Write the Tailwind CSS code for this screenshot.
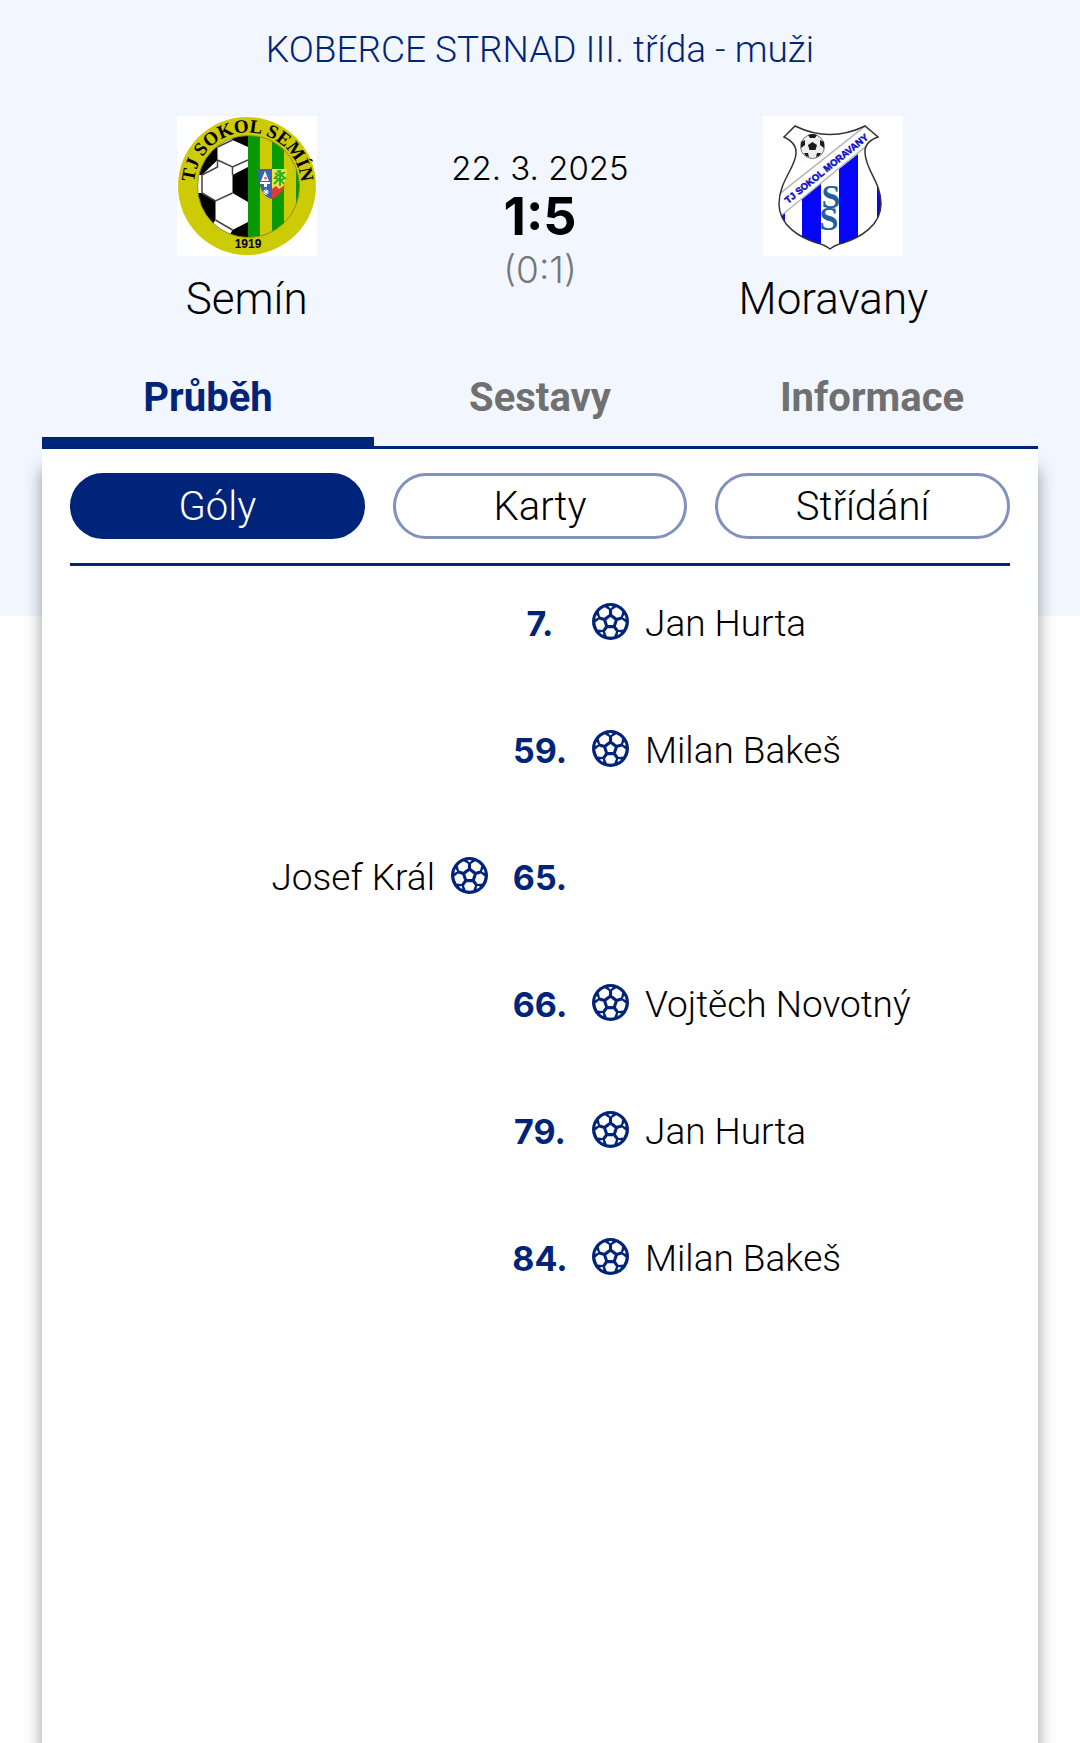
<!DOCTYPE html>
<html lang="cs">
<head>
  <meta charset="UTF-8" />
  <meta name="viewport" content="width=device-width, initial-scale=1.0">
  <title>Semín - Moravany</title>
  <script src="https://cdn.jsdelivr.net/npm/@tailwindcss/browser@4"></script>
</head>
<body class="bg-white text-black font-['Roboto',sans-serif] font-[350] min-h-screen flex flex-col overflow-x-hidden">

  <!-- Shared goal icon -->
  <svg class="hidden">
    <symbol id="goal" viewBox="-50 -50 100 100">
      <circle r="50" fill="#00247a" />
      <g fill="#fff">
        <path d="M0-12 11.400-3.700 7 9.700H-7L-11.400-3.700Z" />
        <g id="goal-part">
          <path d="M-8 18H8L15 28 10 40Q0 42-10 40L-15 28Z" />
          <path d="M0-35 6-41Q0-43-6-41Z" />
        </g>
        <use href="#goal-part" transform="rotate(72)" />
        <use href="#goal-part" transform="rotate(144)" />
        <use href="#goal-part" transform="rotate(216)" />
        <use href="#goal-part" transform="rotate(288)" />
      </g>
    </symbol>
  </svg>

  <!-- Match header -->
  <header class="bg-[#f2f7ff] pt-5 pb-[167px]">
    <h1 class="text-center text-[37px] leading-[60px] text-[#00247a]">KOBERCE STRNAD III. třída - muži</h1>

    <div class="grid grid-cols-3 px-[100px] pt-9 text-center">
      <div class="flex flex-col items-center">
        <svg class="w-[140px] h-[140px]" viewBox="0 0 140 140" role="img" aria-label="TJ Sokol Semín">
          <defs>
            <clipPath id="semin-inner"><circle cx="71.500" cy="70.500" r="51" /></clipPath>
            <path id="semin-arc" d="M17 70A53.500 53.500 0 0 1 124 70" />
          </defs>
          <rect width="140" height="140" fill="#fff" />
          <circle cx="70" cy="70" r="69" fill="#cdcb05" />
          <g clip-path="url(#semin-inner)">
            <rect x="20" y="18" width="51" height="106" fill="#fff" />
            <g fill="#000">
              <path d="M52 18H71V31L55.500 24Z" />
              <path d="M18 20 40.500 31V44L25 59H18Z" />
              <path d="M71 51 55.500 59V77L71 86Z" />
              <path d="M18 77H25L38.500 85V104L30 116 18 100Z" />
              <path d="M55.500 114 71 106V124H50Z" />
            </g>
            <path d="M40.500 31 55.500 24M40.500 44 55.500 51 71 44M55.500 51V59M40.500 44 40.500 51 25 59V77L38.500 85 55.500 77M38.500 104 55.500 114" fill="none" stroke="#444" stroke-width="1.500" />
            <path d="M71 18H83V124H71ZM95 18H107V124H95ZM119 18H126V124H119Z" fill="#079a05" />
            <path d="M83 18H95V124H83ZM107 18H119V124H107Z" fill="#cdcb05" />
          </g>
          <circle cx="71.500" cy="70.500" r="51" fill="none" stroke="#8f8f20" />
          <!-- Town arms -->
          <path d="M81 53H95V83Q81 80 81 53Z" fill="#3c62b4" />
          <path d="M95 53H110Q109 67 105 74H95Z" fill="#f2e23c" />
          <path d="M95 73 99 70 102 73 108 69Q103 81 95 83Z" fill="#dd3a3c" />
          <path d="M88 55 92 65H84ZM83 66H93V68H83ZM87 68H90V71H87Z" fill="#fff" />
          <circle cx="88.500" cy="62" r="1.500" fill="#e36a6a" />
          <path d="M89 73V79M86 76H92M87 74 91 78M91 74 87 78" stroke="#fff" />
          <path d="M103 54V70M98 57 101 59 98 62 102 63 97 68M108 56 104 59 108 62 104 64 107 68M100 55 106 58" fill="none" stroke="#2fae2c" stroke-width="2" />
          <text class="font-['Liberation_Serif',serif] font-bold" font-size="19" text-anchor="middle"><textPath href="#semin-arc" startOffset="50%">TJ SOKOL SEMÍN</textPath></text>
          <text class="font-['Liberation_Sans',sans-serif] font-bold" x="71" y="132" font-size="12" text-anchor="middle">1919</text>
        </svg>
        <h2 class="mt-4 text-[44px] leading-[54px]">Semín</h2>
      </div>

      <div class="pt-8 font-['Inter',sans-serif] font-light">
        <p class="text-[33px] leading-[40px]">22. 3. 2025</p>
        <p class="text-[52px] leading-[58px] font-bold">1:5</p>
        <p class="text-[37px] leading-[48px] text-[#777]">(0:1)</p>
      </div>

      <div class="flex flex-col items-center">
        <svg class="w-[140px] h-[140px]" viewBox="0 0 140 140" role="img" aria-label="TJ Sokol Moravany">
          <defs>
            <path id="moravany-shield" d="M32 10Q67 27 102 10L115 21Q101 26 102 37C103 55 118 66 118 88C118 110 96 122 80 127Q72 129 67 133Q62 129 54 127C38 122 16 110 16 88C16 66 32 52 33 38Q34 27 21 21Z" />
            <clipPath id="moravany-clip"><use href="#moravany-shield" /></clipPath>
          </defs>
          <rect width="140" height="140" fill="#fff" />
          <g clip-path="url(#moravany-clip)">
            <path d="M16 101 22 96V130H16ZM39 83 58 67V135H39ZM76 53 95 38V135H76ZM114 20H122V130H114Z" fill="#0505fa" />
            <path d="M10 83 106 7 118 18 14 103Z" fill="#fff" stroke="#b5b5b5" stroke-width="1.500" />
          </g>
          <use href="#moravany-shield" fill="none" stroke="#333" stroke-width="1.500" />
          <circle cx="49.500" cy="30.500" r="12" fill="#eee" stroke="#777" />
          <path d="M49.500 26 54 29 52.500 34H46.500L45 29ZM45 19Q50 17 54 19L52 22H47ZM38 26 42 24 42 29 38 32ZM61 26 57 24V29L61 32ZM41 37 45 37 46 41 43 40ZM58 37 54 37 53 41 56 40Z" fill="#1a1a1a" />
          <g class="font-['Liberation_Serif',serif] font-bold" fill="#23609a" font-size="34" text-anchor="middle">
            <text x="68" y="92">S</text>
            <text x="66" y="114">S</text>
          </g>
          <text class="font-['Liberation_Sans',sans-serif] font-bold" transform="translate(25 88) rotate(-39)" font-size="9.500" fill="#0c0cc8" stroke="#0c0cc8" stroke-width="0.500">TJ SOKOL MORAVANY</text>
        </svg>
        <h2 class="mt-4 text-[44px] leading-[54px]">Moravany</h2>
      </div>
    </div>

    <!-- Tabs -->
    <nav class="mx-[42px] mt-[30px] grid grid-cols-3 border-b-3 border-[#00247a] text-[40px] font-bold text-[#707070]">
      <button type="button" class="h-[90px] pt-0.5 border-b-9 border-[#00247a] text-[#00247a]">Průběh</button>
      <button type="button" class="h-[90px] pt-0.5 border-b-9 border-transparent">Sestavy</button>
      <button type="button" class="h-[90px] pt-0.5 border-b-9 border-transparent">Informace</button>
    </nav>
  </header>

  <!-- Match events -->
  <main class="flex-1 mx-[42px] -mt-[167px] px-7 pt-6 bg-white shadow-[0_20px_16px_rgba(0,0,0,0.4)]">
    <div class="grid grid-cols-3 gap-7 pb-6 border-b-3 border-[#00247a] text-[40px]">
      <button type="button" class="h-[66px] pt-0.5 rounded-full border-3 border-[#00247a] bg-[#00247a] text-white leading-none">Góly</button>
      <button type="button" class="h-[66px] pt-0.5 rounded-full border-3 border-[#8092bd] leading-none">Karty</button>
      <button type="button" class="h-[66px] pt-0.5 rounded-full border-3 border-[#8092bd] leading-none">Střídání</button>
    </div>

    <ul class="text-[37px] leading-[52px]">
      <li class="grid grid-cols-[1fr_104px_1fr] pt-8 pb-[43px]">
        <span></span>
        <b class="text-center font-['Inter',sans-serif] font-bold text-[34px] text-[#00247a]">7.</b>
        <span class="flex gap-4"><svg class="w-[37px] h-[37px] mt-[5px]"><use href="#goal" /></svg>Jan Hurta</span>
      </li>
      <li class="grid grid-cols-[1fr_104px_1fr] pt-8 pb-[43px]">
        <span></span>
        <b class="text-center font-['Inter',sans-serif] font-bold text-[34px] text-[#00247a]">59.</b>
        <span class="flex gap-4"><svg class="w-[37px] h-[37px] mt-[5px]"><use href="#goal" /></svg>Milan Bakeš</span>
      </li>
      <li class="grid grid-cols-[1fr_104px_1fr] pt-8 pb-[43px]">
        <span class="flex justify-end gap-4">Josef Král<svg class="w-[37px] h-[37px] mt-[5px]"><use href="#goal" /></svg></span>
        <b class="text-center font-['Inter',sans-serif] font-bold text-[34px] text-[#00247a]">65.</b>
        <span></span>
      </li>
      <li class="grid grid-cols-[1fr_104px_1fr] pt-8 pb-[43px]">
        <span></span>
        <b class="text-center font-['Inter',sans-serif] font-bold text-[34px] text-[#00247a]">66.</b>
        <span class="flex gap-4"><svg class="w-[37px] h-[37px] mt-[5px]"><use href="#goal" /></svg>Vojtěch Novotný</span>
      </li>
      <li class="grid grid-cols-[1fr_104px_1fr] pt-8 pb-[43px]">
        <span></span>
        <b class="text-center font-['Inter',sans-serif] font-bold text-[34px] text-[#00247a]">79.</b>
        <span class="flex gap-4"><svg class="w-[37px] h-[37px] mt-[5px]"><use href="#goal" /></svg>Jan Hurta</span>
      </li>
      <li class="grid grid-cols-[1fr_104px_1fr] pt-8 pb-[43px]">
        <span></span>
        <b class="text-center font-['Inter',sans-serif] font-bold text-[34px] text-[#00247a]">84.</b>
        <span class="flex gap-4"><svg class="w-[37px] h-[37px] mt-[5px]"><use href="#goal" /></svg>Milan Bakeš</span>
      </li>
    </ul>
  </main>

</body>
</html>
